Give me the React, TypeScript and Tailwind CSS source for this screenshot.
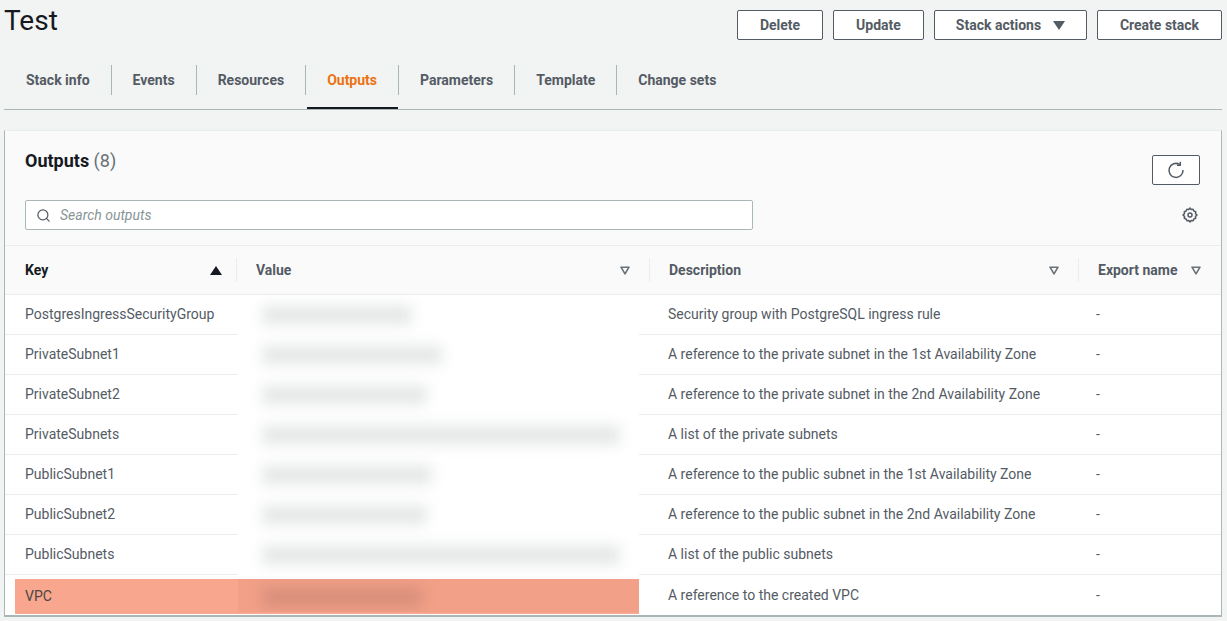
import * as React from "react";
import { Search } from "lucide-react";

const tabs = ["Stack info", "Events", "Resources", "Outputs", "Parameters", "Template", "Change sets"];

const rows = [
  { key: "PostgresIngressSecurityGroup", description: "Security group with PostgreSQL ingress rule", blur: "w-[150px]" },
  { key: "PrivateSubnet1", description: "A reference to the private subnet in the 1st Availability Zone", blur: "w-[180px]" },
  { key: "PrivateSubnet2", description: "A reference to the private subnet in the 2nd Availability Zone", blur: "w-[165px]" },
  { key: "PrivateSubnets", description: "A list of the private subnets", blur: "w-[358px]" },
  { key: "PublicSubnet1", description: "A reference to the public subnet in the 1st Availability Zone", blur: "w-[170px]" },
  { key: "PublicSubnet2", description: "A reference to the public subnet in the 2nd Availability Zone", blur: "w-[165px]" },
  { key: "PublicSubnets", description: "A list of the public subnets", blur: "w-[358px]" },
];

const FilterCaret = () => (
  <svg width="10" height="9" viewBox="0 0 10 9" className="shrink-0">
    <path d="M1 1.2h8L5 7.8z" fill="none" stroke="#687078" strokeWidth="1.6" strokeLinejoin="round" />
  </svg>
);

const SolidCaret = ({ up, color }: { up?: boolean; color: string }) => (
  <svg width="12" height="9" viewBox="0 0 12 9" className="shrink-0">
    <path d={up ? "M6 0l6 9H0z" : "M0 0h12L6 9z"} fill={color} />
  </svg>
);

const Button = ({ children, className }: { children: React.ReactNode; className: string }) => (
  <button className={`h-[30px] flex items-center justify-center rounded-[2px] border border-[#545b64] bg-white text-[14px] font-bold text-[#545b64] ${className}`}>
    {children}
  </button>
);

const HeaderCell = ({ label, className, dark }: { label: string; className: string; dark?: boolean }) => (
  <div className={`flex items-center text-[14px] font-bold ${dark ? "text-[#16191f]" : "text-[#545b64]"} ${className}`}>
    <span>{label}</span>
  </div>
);

const Separator = () => <div className="h-6 w-px bg-[#eaeded]" />;

export default function App() {
  return (
    <div className="h-[621px] w-[1227px] overflow-hidden bg-[#f2f3f3] pl-1 pr-[5px] font-['Roboto',sans-serif]">
      <div className="flex h-[65px] items-start justify-between">
        <h1 className="text-[28px] leading-[42px] text-[#16191f]">Test</h1>
        <div className="mt-[10px] flex gap-[10px]">
          <Button className="w-[86px]">Delete</Button>
          <Button className="w-[91px]">Update</Button>
          <Button className="w-[153px] gap-[12px]">
            Stack actions
            <SolidCaret color="#545b64" />
          </Button>
          <Button className="w-[125px]">Create stack</Button>
        </div>
      </div>

      <div className="relative flex h-[45px] border-b border-[#aab7b8] pb-[14px]">
        {tabs.map((tab, i) => (
          <div
            key={tab}
            className={`relative flex h-[30px] items-center text-[14px] font-bold ${
              i === 0 ? "pl-[22px] pr-[21px]" : "px-[21px]"
            } ${i < tabs.length - 1 ? "border-r border-[#aab7b8]" : ""} ${tab === "Outputs" ? "text-[#ec7211]" : "text-[#545b64]"}`}
          >
            {tab}
            {tab === "Outputs" && <div className="absolute -bottom-[14px] left-[1px] right-0 h-[2px] bg-[#16191f]" />}
          </div>
        ))}
      </div>

      <div className="mt-[20px] w-[1218px] border-x border-b-2 border-x-[#aab7b8] border-b-[#aab7b8] border-t border-t-[#eaeded] bg-white">
        <div className="relative h-[115px] border-b border-[#eaeded] bg-[#fafafa] pl-5 pr-[21px]">
          <div className="flex items-start justify-between">
            <h2 className="mt-[18px] text-[18px] leading-[24px] font-bold text-[#16191f]">
              Outputs <span className="font-normal text-[#687078]">(8)</span>
            </h2>
            <button className="mt-6 flex h-[30px] w-[48px] items-center justify-center rounded-[2px] border border-[#545b64] bg-white">
              <svg width="18" height="18" viewBox="0 0 18 18" fill="none" stroke="#545b64" strokeWidth="1.5">
                <path d="M12.6 3.4A7 7 0 1 0 16 9" />
                <path d="M12.9.8v3.4H9.5" transform="translate(.4 0)" />
              </svg>
            </button>
          </div>
          <div className="mt-[15px] flex items-center justify-between">
            <div className="flex h-[30px] w-[728px] items-center gap-[9px] rounded-[2px] border border-[#aab7b8] bg-white pl-[10px]">
              <Search size={15} strokeWidth={2} className="text-[#545b64]" />
              <span className="text-[14px] italic text-[#879596]">Search outputs</span>
            </div>
            <svg width="16" height="16" viewBox="0 0 16 16" fill="none" stroke="#545b64" strokeWidth="1.5" className="mr-[2px]">
              <circle cx="8" cy="8" r="2" />
              <path d="M8 1l1.2 1.5 1.9-.2.8 1.7 1.8.7-.2 1.9L15 8l-1.5 1.4.2 1.9-1.8.7-.8 1.7-1.9-.2L8 15l-1.2-1.5-1.9.2-.8-1.7-1.8-.7.2-1.9L1 8l1.5-1.4-.2-1.9 1.8-.7.8-1.7 1.9.2z" strokeLinejoin="round" />
            </svg>
          </div>
        </div>

        <div className="grid h-[49px] grid-cols-[231px_413px_429px_1fr] items-center border-b border-[#eaeded] bg-[#fafafa]">
          <div className="flex items-center justify-between pl-5 pr-[14px]">
            <HeaderCell label="Key" className="" dark />
            <SolidCaret up color="#16191f" />
          </div>
          <div className="flex items-center justify-between pr-[19px]">
            <div className="flex items-center gap-[19px]">
              <Separator />
              <HeaderCell label="Value" className="" />
            </div>
            <FilterCaret />
          </div>
          <div className="flex items-center justify-between pr-[19px]">
            <div className="flex items-center gap-[19px]">
              <Separator />
              <HeaderCell label="Description" className="" />
            </div>
            <FilterCaret />
          </div>
          <div className="flex items-center justify-between pr-[20px]">
            <div className="flex items-center gap-[19px]">
              <Separator />
              <HeaderCell label="Export name" className="" />
            </div>
            <FilterCaret />
          </div>
        </div>

        <div className="text-[14px] text-[#545b64]">
          {rows.map((row) => (
            <div key={row.key} className="grid h-10 grid-cols-[233px_401px_438px_1fr]">
              <div className="flex items-center border-b border-[#eaeded] pl-5">{row.key}</div>
              <div className="relative">
                <div className={`absolute left-[24px] top-[10px] h-[20px] bg-[#e6e8e8] blur-[7px] ${row.blur}`} />
              </div>
              <div className="flex items-center border-b border-[#eaeded] pl-[29px]">{row.description}</div>
              <div className="flex items-center border-b border-[#eaeded] pl-[19px]">-</div>
            </div>
          ))}
          <div className="grid h-10 grid-cols-[233px_401px_438px_1fr]">
            <div className="pl-[10px] pt-[4px]">
              <div className="flex h-[35px] items-center bg-[#f8a68d] pl-[10px] text-[#4a4745]">VPC</div>
            </div>
            <div className="pt-[4px]">
              <div className="h-[35px] bg-[#f8a68d]">
                <div className="relative h-[33px] overflow-hidden bg-[#f2a088]">
                  <div className="absolute left-[24px] top-[8px] h-[20px] w-[160px] bg-[#d98f7b] blur-[7px]" />
                </div>
              </div>
            </div>
            <div className="flex items-center pl-[29px]">A reference to the created VPC</div>
            <div className="flex items-center pl-[19px]">-</div>
          </div>
        </div>
      </div>
    </div>
  );
}
